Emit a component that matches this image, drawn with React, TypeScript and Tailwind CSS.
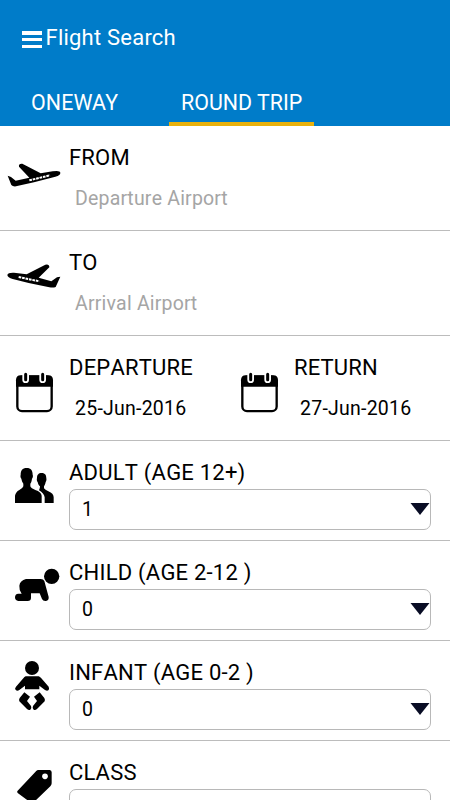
import type { ReactNode } from 'react';

function Icon({ children }: { children: ReactNode }) {
  return (
    <svg viewBox="0 0 186 240" className="h-20 w-[62px] shrink-0" fill="#000">
      {children}
    </svg>
  );
}

function TakeoffIcon() {
  return (
    <Icon>
      <path d="M23 107L33 111L47 122L88 113L57 80Q55 70 67 71L122 100L158 94Q180 90 181 98Q182 105 166 110L102 127L48 139Q38 140 34 135Z" />
      <path d="M88 121L150 106" stroke="#fff" strokeWidth="6" strokeDasharray="8 2.5" />
    </Icon>
  );
}

function LandingIcon() {
  return (
    <Icon>
      <path d="M181 95L167 126Q160 129 148 127L86 114L38 102Q23 98 22 90Q24 82 42 83L80 88L136 59Q148 56 148 67L116 98L154 109L171 97Z" />
      <path d="M56 96L118 109" stroke="#fff" strokeWidth="6" strokeDasharray="8 2.5" />
    </Icon>
  );
}

function CalendarIcon() {
  return (
    <Icon>
      <rect x="52" y="80" width="103" height="103.5" rx="14" fill="#fff" stroke="#000" strokeWidth="7" />
      <path d="M48 110V91Q48 76 62 76H145Q159 76 159 91V110Z" />
      <path d="M77 74V89M128 74V89" stroke="#fff" strokeWidth="20" strokeLinecap="round" />
      <path d="M77 73V89M128 73V89" stroke="#000" strokeWidth="9" strokeLinecap="round" />
    </Icon>
  );
}

function AdultsIcon() {
  return (
    <Icon>
      <path d="M80 54C93 54 98 62 98 74C100 78 98 84 96 86C95 94 93 98 91 101V109Q93 115 106 120Q124 126 125 137V159H45V137Q47 126 58 120Q69 114 70 109V101C67 97 65 92 64 86C61 83 61 77 62 74C62 62 67 54 80 54Z" />
      <path d="M125 69C136 69 139 76 139 85C140 89 139 94 137 96C136 103 133 107 132 109V115Q135 119 145 124Q161 130 161 142V159H134V142Q132 130 117 121Q120 116 120 109C116 106 114 101 113 96C110 93 110 88 111 84C111 75 115 69 125 69Z" />
    </Icon>
  );
}

function CrawlingIcon() {
  return (
    <Icon>
      <circle cx="155" cy="79" r="23" />
      <path d="M78 87H122Q130 87 133 93L146 141Q147 151 138 153Q129 154 126 147L119 130H93V144Q93 153 83 153H55Q45 152 45 142Q45 132 55 131H65Q57 121 58 107Q60 92 78 87Z" />
    </Icon>
  );
}

function InfantIcon() {
  return (
    <Icon>
      <circle cx="96" cy="54" r="21" />
      <path d="M77 79H116Q120 80 124 85L146 110Q149 117 145 121Q141 124 135 120L118 107V118H75V107L58 120Q52 124 47 120Q43 115 48 110L70 85Q73 80 77 79Z" />
      <path d="M73 127L90 140L81 153L93 168Q96 175 91 179Q86 181 81 177L58 154Q56 149 59 144Z" />
      <path d="M119 127L102 140L111 153L99 168Q96 175 101 179Q106 181 111 177L134 154Q136 149 133 144Z" />
    </Icon>
  );
}

function TagIcon() {
  return (
    <Icon>
      <path d="M115 60H149Q155 61 155 67V100Q155 105 151 109L101 157Q96 162 91 157L53 129Q50 125 53 122L108 64Q111 60 115 60Z" />
      <circle cx="135" cy="79" r="8.5" fill="#fff" />
    </Icon>
  );
}

function Field({ icon, label, value, muted }: { icon: ReactNode; label: string; value: string; muted?: boolean }) {
  return (
    <div className="flex flex-1 pt-3.5">
      {icon}
      <div className="ml-[7px]">
        <div className="mt-[5px] text-[22px] leading-[26px] tracking-[0.2px]">{label}</div>
        <div
          className={
            muted
              ? 'mt-4 ml-1.5 text-[19.5px] leading-6 tracking-[0.2px] text-[#a5a5a5]'
              : 'mt-4 ml-1.5 text-[19.5px] leading-6 tracking-[0.24px]'
          }
        >
          {value}
        </div>
      </div>
    </div>
  );
}

function SelectRow({ icon, label, value }: { icon: ReactNode; label: string; value?: string }) {
  return (
    <div className="flex h-[100px] border-b border-[#bcbcbc] pt-[9px]">
      {icon}
      <div className="ml-[7px] w-[362px]">
        <div className="mt-2.5 text-[22px] leading-[26px] tracking-[0.22px]">{label}</div>
        <div className="mt-[3px] flex h-[41px] items-center justify-between rounded-[7px] border border-[#b8b8b8] pb-px pl-3">
          <span className="pt-0.5 text-[19.5px] leading-6">{value}</span>
          <svg viewBox="0 0 20 12" className="h-3 w-5">
            <path d="M0.5 0H19.5L10 12Z" fill="#080c24" />
          </svg>
        </div>
      </div>
    </div>
  );
}

export default function App() {
  return (
    <div className="h-[800px] w-[450px] overflow-hidden bg-white font-['Roboto',sans-serif] text-black">
      <header className="flex h-[126px] flex-col justify-between bg-[#007cc9] text-white">
        <div className="flex pt-[25px] pl-[22px]">
          <div className="mt-1.5 mr-[3.5px] flex h-[17px] w-5 flex-col justify-between">
            <span className="h-[3.5px] bg-white" />
            <span className="h-[3.5px] bg-white" />
            <span className="h-[3.5px] bg-white" />
          </div>
          <h1 className="text-[22px] leading-[26px] tracking-[0.22px]">Flight Search</h1>
        </div>
        <nav className="flex text-[21.4px] leading-[26px]">
          <div className="w-[169px] pt-px pl-[31px] tracking-[0.1px]">ONEWAY</div>
          <div className="h-[37px] w-[145px] border-b-4 border-[#e9b10c] pt-px pl-3">ROUND TRIP</div>
        </nav>
      </header>
      <main className="[font-kerning:none]">
        <div className="flex h-[105px] border-b border-[#bcbcbc]">
          <Field icon={<TakeoffIcon />} label="FROM" value="Departure Airport" muted />
        </div>
        <div className="flex h-[105px] border-b border-[#bcbcbc]">
          <Field icon={<LandingIcon />} label="TO" value="Arrival Airport" muted />
        </div>
        <div className="flex h-[105px] border-b border-[#bcbcbc]">
          <Field icon={<CalendarIcon />} label="DEPARTURE" value="25-Jun-2016" />
          <Field icon={<CalendarIcon />} label="RETURN" value="27-Jun-2016" />
        </div>
        <SelectRow icon={<AdultsIcon />} label="ADULT (AGE 12+)" value="1" />
        <SelectRow icon={<CrawlingIcon />} label="CHILD (AGE 2-12 )" value="0" />
        <SelectRow icon={<InfantIcon />} label="INFANT (AGE 0-2 )" value="0" />
        <SelectRow icon={<TagIcon />} label="CLASS" />
      </main>
    </div>
  );
}
